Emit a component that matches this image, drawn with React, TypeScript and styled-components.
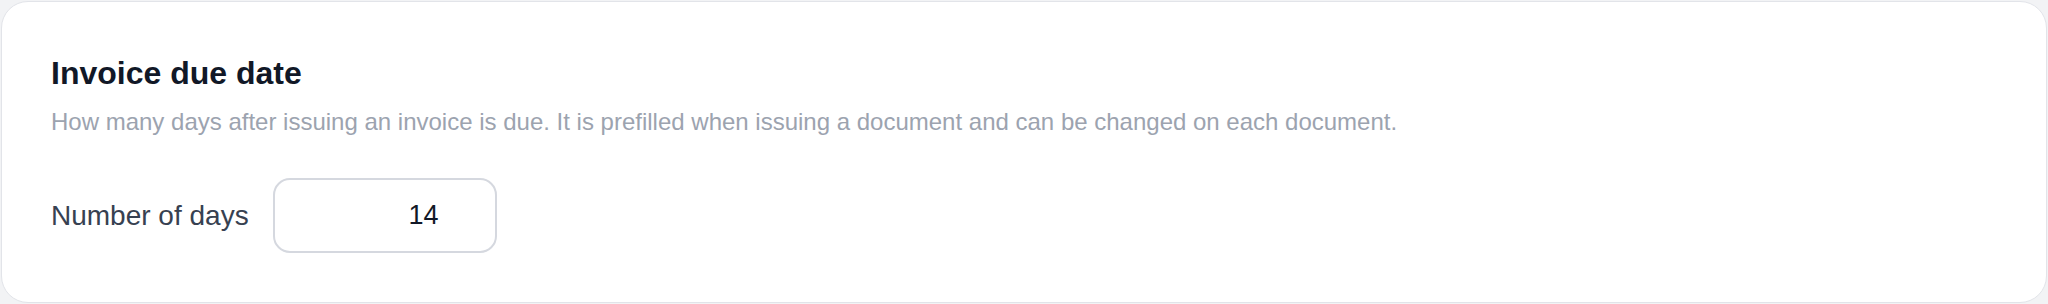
import React from "react";
import styled, { createGlobalStyle } from "styled-components";

const GlobalStyle = createGlobalStyle`
  html, body {
    margin: 0;
    padding: 0;
    background: #f2f3f5;
  }
  body {
    font-family: "Liberation Sans", Arial, sans-serif;
  }
  * { box-sizing: border-box; }
`;

const Card = styled.section`
  margin: 1px;
  background: #ffffff;
  border: 1px solid #e2e4e9;
  border-radius: 27px;
  padding: 51px 49px 49px 49px;
  display: flex;
  flex-direction: column;
`;

const Title = styled.h2`
  margin: 0;
  font-size: 32px;
  line-height: 40px;
  font-weight: 700;
  color: #111827;
`;

const Description = styled.p`
  margin: 13px 0 0 0;
  font-size: 24px;
  line-height: 32px;
  color: #9ca3af;
`;

const FieldRow = styled.div`
  margin-top: 40px;
  display: flex;
  align-items: center;
  gap: 24px;
`;

const Label = styled.label`
  font-size: 28px;
  line-height: 36px;
  color: #374151;
`;

const NumberInput = styled.input`
  width: 224px;
  height: 75px;
  border: 2px solid #d5d8df;
  border-radius: 17px;
  background: #ffffff;
  padding: 0 56px 0 16px;
  text-align: right;
  font-family: "Liberation Sans", Arial, sans-serif;
  font-size: 27px;
  color: #111827;
  outline: none;
`;

export default function App() {
  return (
    <>
      <GlobalStyle />
      <Card>
        <Title>Invoice due date</Title>
        <Description>
          How many days after issuing an invoice is due. It is prefilled when
          issuing a document and can be changed on each document.
        </Description>
        <FieldRow>
          <Label htmlFor="days">Number of days</Label>
          <NumberInput id="days" type="text" defaultValue="14" />
        </FieldRow>
      </Card>
    </>
  );
}
